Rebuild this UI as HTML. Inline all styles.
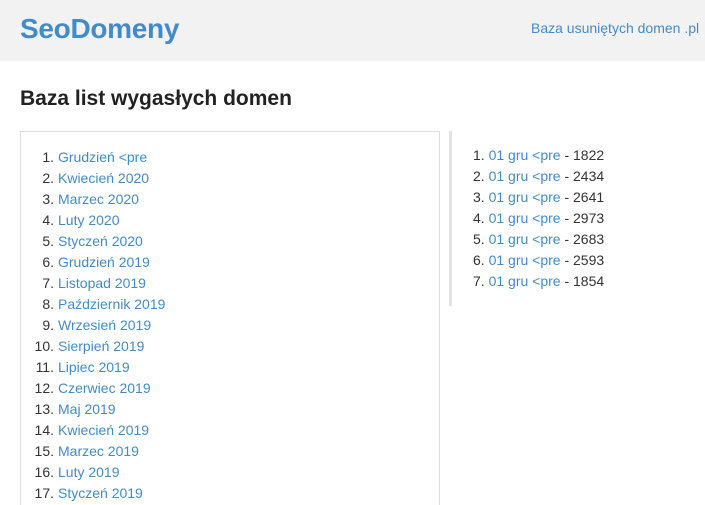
<!DOCTYPE html><html><head><meta charset="utf-8"><style>
html,body{margin:0;height:505px;overflow:hidden}
body{font-family:"Liberation Sans",sans-serif;font-size:14px;color:#333;background:#fff;width:705px;position:relative}
a{color:#428bca;text-decoration:none}
.hd{position:absolute;left:0;top:0;width:705px;height:61px;background:#f2f2f2}
.logo{position:absolute;left:20px;top:13px;font-size:28px;font-weight:bold;color:#428bca;letter-spacing:-0.3px}
.nav{position:absolute;left:531px;top:20px;font-size:14px}
h1{position:absolute;left:20px;top:87px;margin:0;font-size:21px;font-weight:bold;color:#222}
.box{position:absolute;left:20px;top:131px;width:418px;height:373px;border:1px solid #ddd;border-bottom:0}
ol{margin:0;padding:0;list-style:none}
ol li{line-height:21px;height:21px;position:relative}
.l{position:absolute;left:0;top:147px;width:200px}
.l li{padding-left:58px}
.l li span.n{position:absolute;right:calc(100% - 54px);}
.bar{position:absolute;left:449px;top:131px;width:3px;height:175px;background:#e3e3e3}
.r{position:absolute;left:473px;top:145px}
</style></head><body>
<div class="hd"><div class="logo">SeoDomeny</div><div class="nav"><a>Baza usuniętych domen .pl</a></div></div>
<h1>Baza list wygasłych domen</h1>
<div class="box"></div>
<ol class="l">
<li><span class="n">1.</span><a>Grudzień &lt;pre</a></li>
<li><span class="n">2.</span><a>Kwiecień 2020</a></li>
<li><span class="n">3.</span><a>Marzec 2020</a></li>
<li><span class="n">4.</span><a>Luty 2020</a></li>
<li><span class="n">5.</span><a>Styczeń 2020</a></li>
<li><span class="n">6.</span><a>Grudzień 2019</a></li>
<li><span class="n">7.</span><a>Listopad 2019</a></li>
<li><span class="n">8.</span><a>Październik 2019</a></li>
<li><span class="n">9.</span><a>Wrzesień 2019</a></li>
<li><span class="n">10.</span><a>Sierpień 2019</a></li>
<li><span class="n">11.</span><a>Lipiec 2019</a></li>
<li><span class="n">12.</span><a>Czerwiec 2019</a></li>
<li><span class="n">13.</span><a>Maj 2019</a></li>
<li><span class="n">14.</span><a>Kwiecień 2019</a></li>
<li><span class="n">15.</span><a>Marzec 2019</a></li>
<li><span class="n">16.</span><a>Luty 2019</a></li>
<li><span class="n">17.</span><a>Styczeń 2019</a></li>
</ol>
<div class="bar"></div>
<ol class="r">
<li>1. <a>01 gru &lt;pre</a> - 1822</li>
<li>2. <a>01 gru &lt;pre</a> - 2434</li>
<li>3. <a>01 gru &lt;pre</a> - 2641</li>
<li>4. <a>01 gru &lt;pre</a> - 2973</li>
<li>5. <a>01 gru &lt;pre</a> - 2683</li>
<li>6. <a>01 gru &lt;pre</a> - 2593</li>
<li>7. <a>01 gru &lt;pre</a> - 1854</li>
</ol>
</body></html>
